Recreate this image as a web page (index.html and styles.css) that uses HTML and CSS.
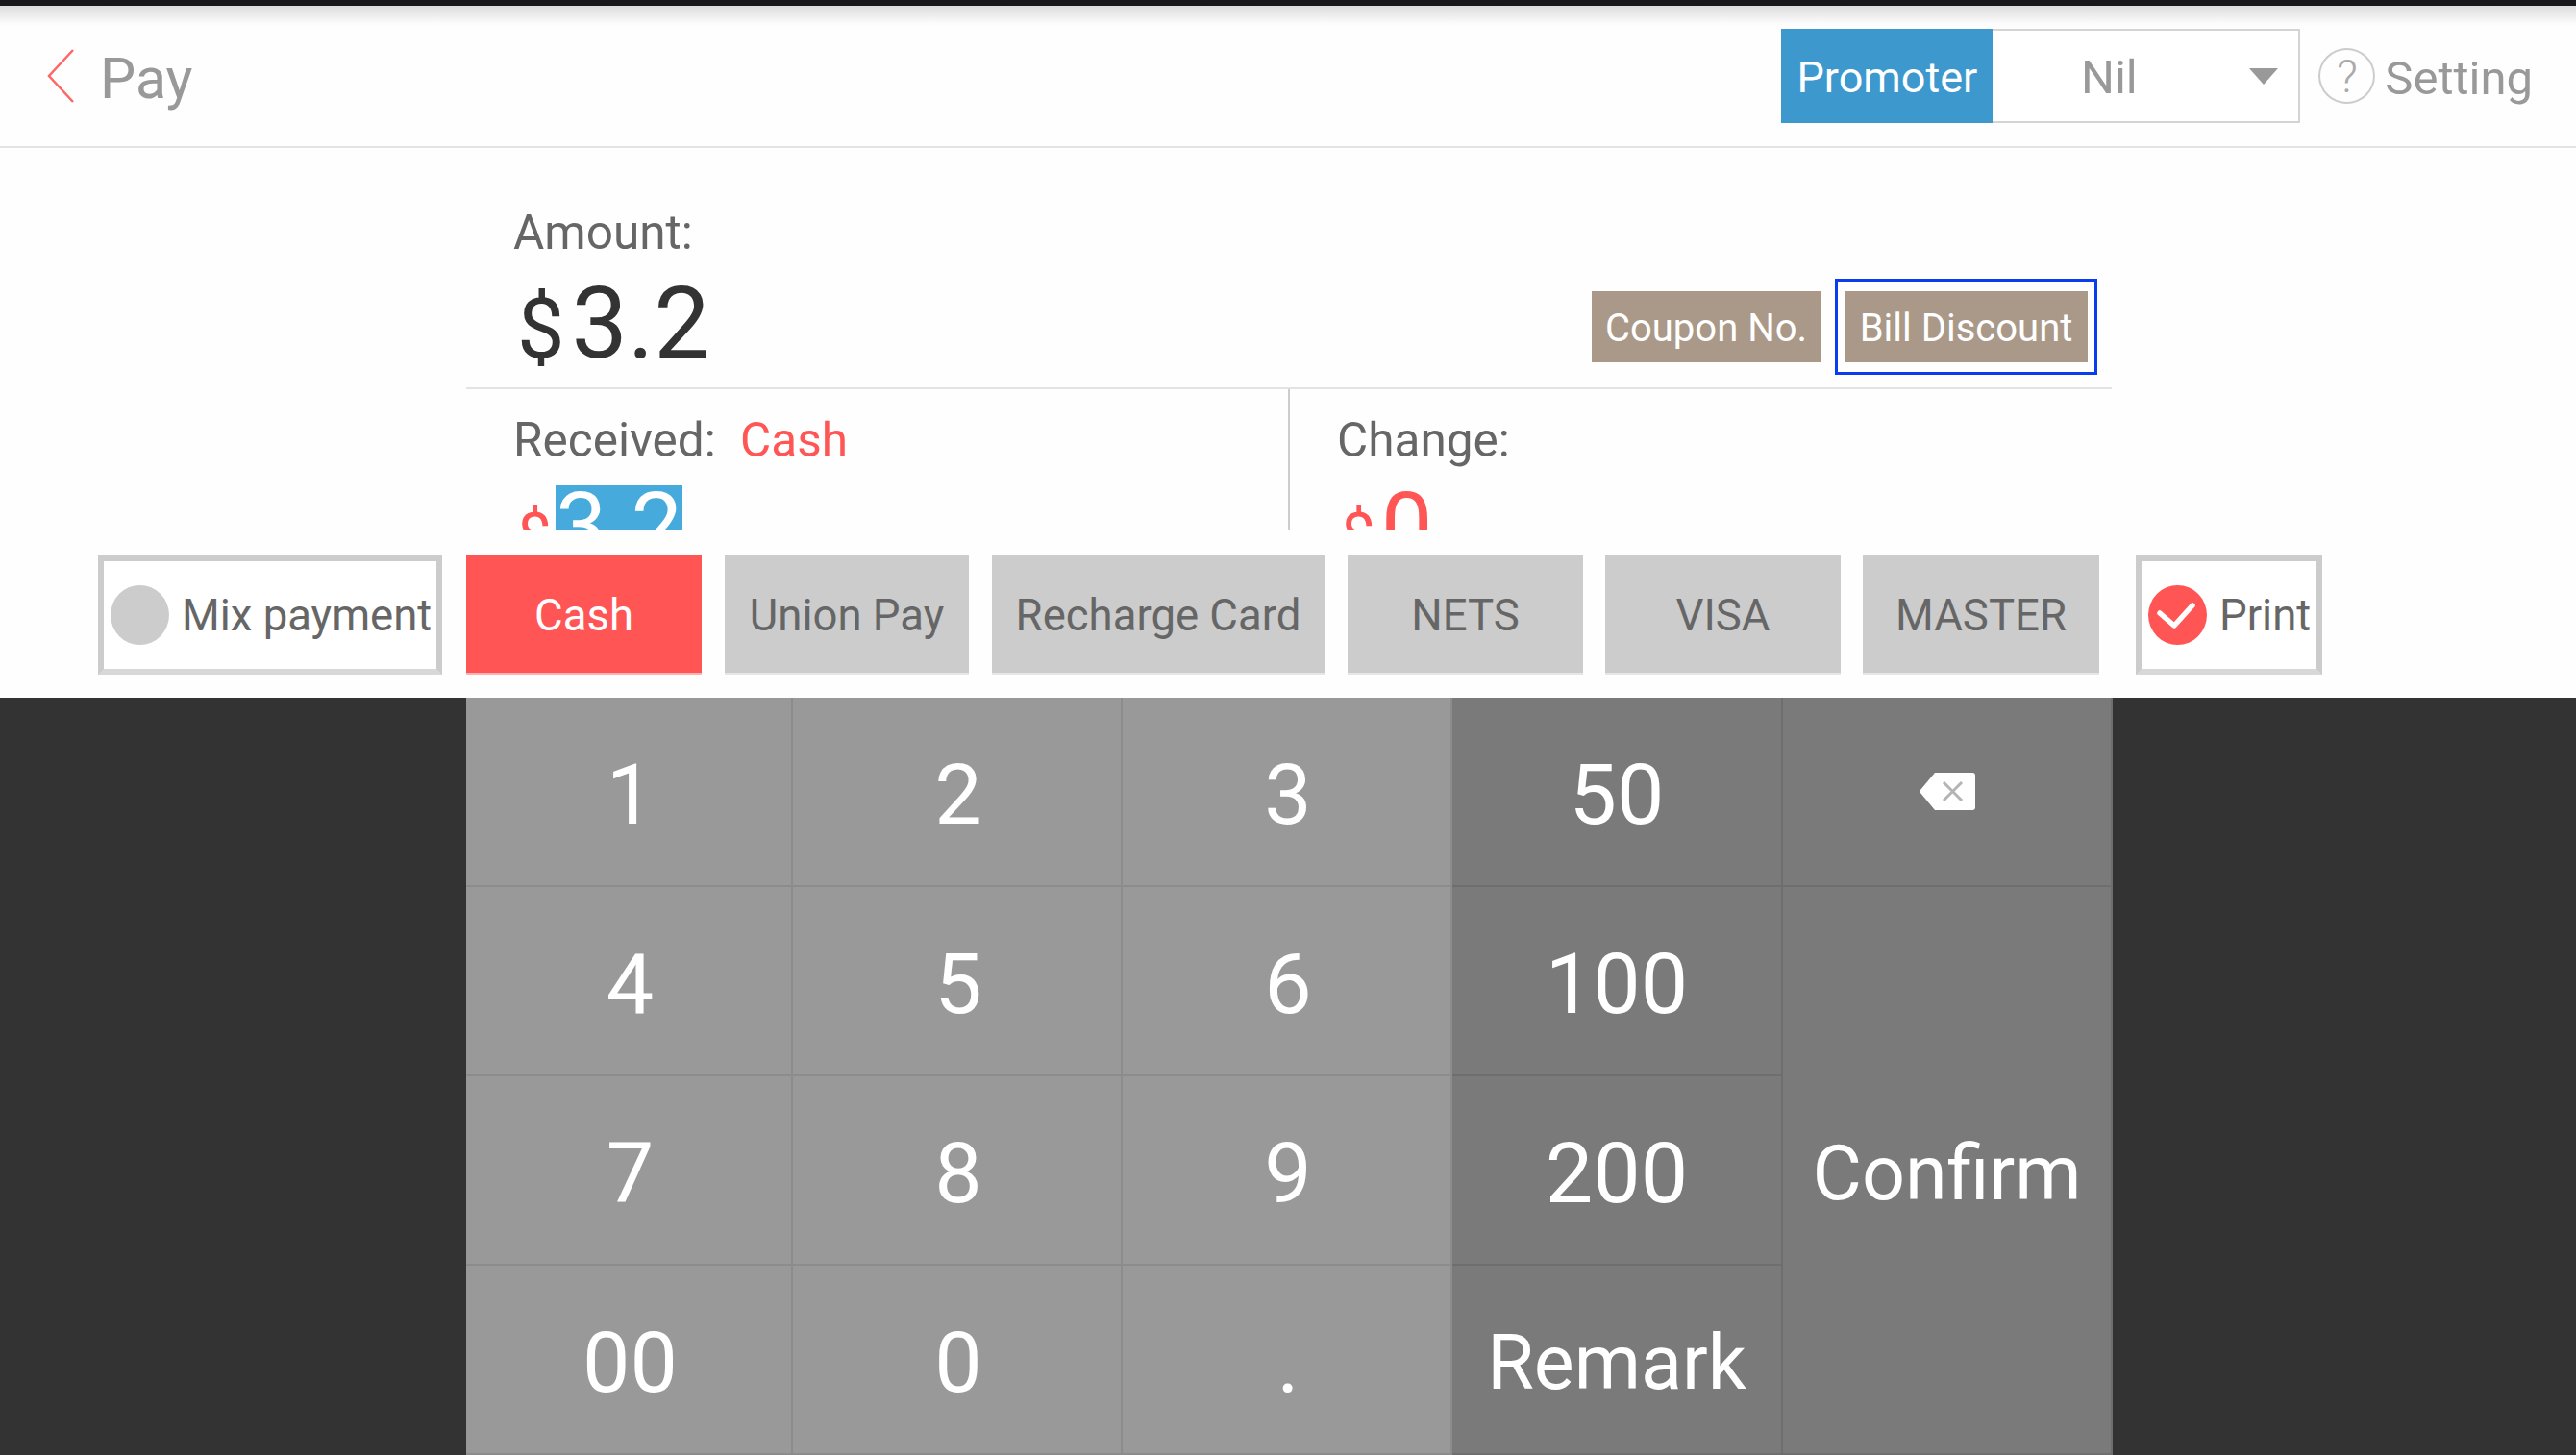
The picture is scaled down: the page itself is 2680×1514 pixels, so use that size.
FILE: index.html
```html
<!DOCTYPE html>
<html lang="en">
<head>
  <meta charset="UTF-8" />
  <title>Pay</title>
  <link rel="stylesheet" href="styles.css">
</head>
<body>
  <div class="status-bar"></div>

  <header class="top-bar">
    <a class="back">
      <svg class="back-icon" width="30" height="58" viewBox="0 0 30 58">
        <path d="M28 2 L3 29 L28 56" fill="none" stroke="#ff6666" stroke-width="2.5" />
      </svg>
      <span class="back-label">Pay</span>
    </a>
    <div class="top-actions">
      <div class="promoter-label">Promoter</div>
      <div class="promoter-select">
        <span class="promoter-value">Nil</span>
        <span class="caret"></span>
      </div>
      <div class="help-icon">?</div>
      <div class="setting">Setting</div>
    </div>
  </header>

  <section class="pay-info">
    <div class="amount-row">
      <div class="amount">
        <div class="field-label">Amount:</div>
        <div class="amount-value"><span class="currency">$</span>3.2</div>
      </div>
      <div class="discounts">
        <button class="tag-btn coupon">Coupon No.</button>
        <div class="focus-ring"><button class="tag-btn">Bill Discount</button></div>
      </div>
    </div>
    <div class="totals">
      <div class="total-col">
        <div class="field-label">Received: <span class="method-name">Cash</span></div>
        <div class="total-value"><span class="currency-small">$</span><span class="selected">3.2</span></div>
      </div>
      <div class="total-col total-change">
        <div class="field-label">Change:</div>
        <div class="total-value"><span class="currency-small">$</span>0</div>
      </div>
    </div>
  </section>

  <nav class="methods">
    <button class="toggle toggle-mix"><span class="dot"></span>Mix payment</button>
    <button class="method method-cash active">Cash</button>
    <button class="method method-union">Union Pay</button>
    <button class="method method-recharge">Recharge Card</button>
    <button class="method method-nets">NETS</button>
    <button class="method method-visa">VISA</button>
    <button class="method method-master">MASTER</button>
    <button class="toggle toggle-print">
      <svg class="dot-check" width="61" height="62" viewBox="0 0 61 62">
        <ellipse cx="30.5" cy="31" rx="30.5" ry="31" fill="#ff5555" />
        <path d="M12 29 L27 42 L46 21" fill="none" stroke="#fff" stroke-width="5.5" stroke-linecap="round" stroke-linejoin="round" />
      </svg>Print
    </button>
  </nav>

  <section class="keypad-wrap">
    <div class="keypad">
      <button class="key">1</button>
      <button class="key">2</button>
      <button class="key">3</button>
      <button class="key dark">50</button>
      <button class="key dark icon-key">
        <svg width="58" height="39" viewBox="0 0 58 39">
          <path d="M16 0 H55 Q58 0 58 3 V36 Q58 39 55 39 H16 L1 21 Q0 19.5 1 18 Z" fill="#fff" />
          <path d="M25 10 L44 29 M44 10 L25 29" stroke="#b4b4b4" stroke-width="3" fill="none" />
        </svg>
      </button>
      <button class="key">4</button>
      <button class="key">5</button>
      <button class="key">6</button>
      <button class="key dark">100</button>
      <button class="key dark word confirm">Confirm</button>
      <button class="key">7</button>
      <button class="key">8</button>
      <button class="key">9</button>
      <button class="key dark">200</button>
      <button class="key">00</button>
      <button class="key">0</button>
      <button class="key">.</button>
      <button class="key dark word">Remark</button>
    </div>
  </section>
</body>
</html>
```

FILE: styles.css
```css
* {
  box-sizing: border-box;
  margin: 0;
  padding: 0;
}

html, body {
  height: 100%;
}

body {
  background: #fefefe;
  font-family: 'Roboto', sans-serif;
  width: 2680px;
  height: 1514px;
  overflow: hidden;
  display: flex;
  flex-direction: column;
}

button {
  font-family: inherit;
  border: none;
}

.status-bar {
  height: 6px;
  background: #17171c;
}

.top-bar {
  height: 148px;
  display: flex;
  align-items: center;
  justify-content: space-between;
  padding: 0 45px 0 48px;
  border-bottom: 2px solid #e3e3e3;
  background: linear-gradient(to bottom, #dcdcdc 0, #fbfbfb 18px, #fefefe 24px);
}

.back {
  display: flex;
  align-items: center;
  gap: 26px;
  font-size: 59px;
  color: #999;
}

.back-label {
  padding-top: 5px;
}

.top-actions {
  display: flex;
  align-items: center;
  height: 98px;
}

.promoter-label {
  width: 220px;
  height: 98px;
  padding-top: 3px;
  background: #3d98ce;
  color: #fff;
  font-size: 45px;
  display: flex;
  align-items: center;
  justify-content: center;
}

.promoter-select {
  width: 320px;
  height: 98px;
  border: 2px solid #d4d4d4;
  border-left: none;
  background: #fff;
  display: flex;
  align-items: center;
  color: #999;
  font-size: 49px;
}

.promoter-value {
  width: 242px;
  padding-top: 3px;
  text-align: center;
}

.caret {
  margin-left: 25px;
  border-left: 15px solid transparent;
  border-right: 15px solid transparent;
  border-top: 17px solid #999;
}

.help-icon {
  width: 59px;
  height: 58px;
  margin: 0 10px 0 19px;
  border: 2px solid #ccc;
  border-radius: 50%;
  display: flex;
  align-items: center;
  justify-content: center;
  font-size: 48px;
  font-weight: 300;
  color: #aaa;
}

.setting {
  font-size: 49px;
  padding-top: 4px;
  color: #999;
}

.pay-info {
  width: 1712px;
  height: 398px;
  margin-left: 485px;
  overflow: hidden;
  flex-shrink: 0;
}

.amount-row {
  height: 251px;
  padding: 0 15px 0 49px;
  display: flex;
  justify-content: space-between;
  border-bottom: 2px solid #e3e3e3;
}

.field-label {
  font-size: 49.5px;
  color: #666;
}

.amount {
  padding-top: 59px;
}

.amount-value {
  font-size: 104px;
  line-height: 106px;
  margin-top: 13px;
  color: #333;
}

.currency {
  font-size: 88px;
  margin: 0 7px 0 4px;
}

.discounts {
  display: flex;
  align-items: flex-end;
  gap: 15px;
  padding-bottom: 13px;
}

.discounts > .tag-btn {
  margin-bottom: 13px;
}

.tag-btn {
  height: 74px;
  padding-top: 2px;
  background: #aa9988;
  color: #fff;
  font-size: 40px;
}

.coupon {
  width: 238px;
}

.focus-ring {
  width: 273px;
  height: 100px;
  border: 3px solid #0a3cf0;
  display: flex;
  align-items: center;
  justify-content: center;
}

.focus-ring .tag-btn {
  width: 253px;
}

.totals {
  display: flex;
  height: 147px;
}

.total-col {
  width: 855px;
  padding: 24px 0 0 49px;
  overflow: hidden;
}

.total-change {
  border-left: 2px solid #ccc;
}

.method-name {
  color: #ff5555;
  margin-left: 13px;
}

.total-value {
  font-size: 95px;
  line-height: 90px;
  margin-top: 15px;
  color: #ff5555;
}

.currency-small {
  font-size: 64px;
  margin: 0 4px 0 4px;
}

.total-change .currency-small {
  margin-right: 6px;
}

.selected {
  display: inline-block;
  line-height: 84px;
  background: #47aadd;
  color: #fff;
}

.methods {
  height: 174px;
  padding: 26px 0 0 102px;
  display: flex;
  align-items: flex-start;
  flex-shrink: 0;
}

.methods button {
  height: 124px;
  padding-top: 3px;
  font-size: 45.5px;
  flex-shrink: 0;
}

.method {
  background: #cccccc;
  color: #666;
  border-bottom: 2px solid #e6e6e6;
  margin-left: 24px;
}

.method.active {
  background: #ff5555;
  color: #fff;
  border-bottom-color: #ffb0b0;
}

.method-cash { width: 245px; margin-left: 25px; }
.method-union { width: 254px; }
.method-recharge { width: 346px; }
.method-nets { width: 245px; }
.method-visa { width: 245px; margin-left: 23px; }
.method-master { width: 246px; margin-left: 23px; }

.toggle {
  background: #fff;
  color: #666;
  border: 6px solid #ccc;
  border-bottom-color: #d8d8d8;
  display: flex;
  align-items: center;
  text-align: left;
}

.methods .toggle {
  padding-top: 0;
}

.toggle-mix {
  width: 358px;
  padding-left: 7px;
}

.toggle-print {
  width: 194px;
  margin-left: 38px;
  padding-left: 7px;
}

.dot {
  width: 61px;
  height: 62px;
  border-radius: 50%;
  background: #ccc;
  margin-right: 13px;
}

.dot-check {
  margin-right: 13px;
  flex-shrink: 0;
}

.keypad-wrap {
  flex: 1;
  background: #333;
  padding-left: 485px;
}

.keypad {
  width: 1713px;
  height: 100%;
  display: grid;
  grid-template-columns: 340px 343px 343px 344px 343px;
  grid-template-rows: 197px 197px 197px 197px;
}

.key {
  padding: 6px 0 0 3px;
  background: #999;
  color: #fff;
  font-size: 88px;
  border-right: 2px solid #8c8c8c;
  border-bottom: 2px solid #8c8c8c;
  display: flex;
  align-items: center;
  justify-content: center;
}

.key.dark {
  padding-left: 0;
  background: #7a7a7a;
  border-color: #6e6e6e;
}

.key.word {
  font-size: 79px;
}

.key.icon-key {
  padding-top: 0;
}

.confirm {
  grid-column: 5;
  grid-row: 2 / span 3;
}
```
